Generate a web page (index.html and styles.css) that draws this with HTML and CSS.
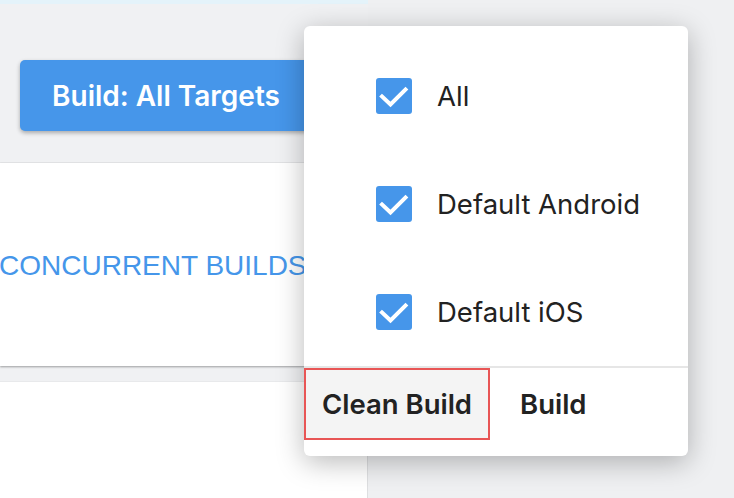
FILE: index.html
```html
<!DOCTYPE html>
<html>
<head>
<meta charset="utf-8">
<link rel="stylesheet" href="styles.css">
</head>
<body>
<div class="page">
  <div class="main">
    <div class="strip"></div>
    <div class="toolbar">
      <button class="primary">Build: All Targets</button>
    </div>
    <div class="card card-top">
      <span class="link">CONCURRENT BUILDS</span>
    </div>
    <div class="card card-bottom"></div>
  </div>
  <div class="popover">
    <ul class="options">
      <li class="option">
        <span class="check"><svg viewBox="0 0 36 36" width="36" height="36"><path d="M6 18.5 L14.5 26.5 L29.5 11.5" fill="none" stroke="#fff" stroke-width="4" stroke-linecap="square"/></svg></span>
        <span class="label">All</span>
      </li>
      <li class="option">
        <span class="check"><svg viewBox="0 0 36 36" width="36" height="36"><path d="M6 18.5 L14.5 26.5 L29.5 11.5" fill="none" stroke="#fff" stroke-width="4" stroke-linecap="square"/></svg></span>
        <span class="label">Default Android</span>
      </li>
      <li class="option">
        <span class="check"><svg viewBox="0 0 36 36" width="36" height="36"><path d="M6 18.5 L14.5 26.5 L29.5 11.5" fill="none" stroke="#fff" stroke-width="4" stroke-linecap="square"/></svg></span>
        <span class="label">Default iOS</span>
      </li>
    </ul>
    <div class="actions">
      <button class="action focused">Clean Build</button>
      <button class="action">Build</button>
    </div>
  </div>
</div>
</body>
</html>
```
FILE: styles.css
```css
* { box-sizing: border-box; }
html, body {
  margin: 0;
  padding: 0;
  width: 734px;
  height: 498px;
  overflow: hidden;
  background: #eff0f2;
  font-family: Inter, "Noto Sans", sans-serif;
}
.page {
  position: relative;
  width: 734px;
  height: 498px;
}
.main {
  width: 368px;
  height: 498px;
  display: flex;
  flex-direction: column;
  background: #f0f1f3;
}
.strip {
  height: 4px;
  background: #e4f3fa;
}
.toolbar {
  height: 159px;
  padding: 56px 0 0 20px;
  border-bottom: 1px solid #e6e7e9;
}
.primary {
  width: 292px;
  height: 71px;
  border: none;
  border-radius: 5px;
  background: #4696ea;
  color: #fff;
  font-family: Inter, sans-serif;
  font-weight: 600;
  font-size: 28px;
  box-shadow: 0 2px 4px rgba(0,0,0,0.3);
  padding: 0;
  white-space: nowrap;
}
.card {
  background: #fff;
}
.card-top {
  height: 203px;
  display: flex;
  align-items: center;
  box-shadow: 0 1px 2px rgba(0,0,0,0.35);
  overflow: hidden;
  white-space: nowrap;
}
.link {
  font-family: "Liberation Sans", Arial, sans-serif;
  font-size: 28px;
  color: #4596ea;
  margin-left: -1px;
  margin-top: 2px;
}
.card-bottom {
  margin-top: 15px;
  flex: 1;
  border-right: 1px solid #dedfe1;
  border-top: 1px solid #e8e9eb;
}
.popover {
  position: absolute;
  left: 304px;
  top: 26px;
  width: 384px;
  height: 430px;
  background: #fff;
  border-radius: 6px;
  box-shadow: 0 6px 28px rgba(0,0,0,0.28);
  display: flex;
  flex-direction: column;
  overflow: hidden;
}
.options {
  list-style: none;
  margin: 0;
  padding: 16px 0 0 72px;
  border-bottom: 2px solid #e6e6e6;
}
.option {
  height: 108px;
  display: flex;
  align-items: center;
  gap: 25px;
}
.check {
  width: 36px;
  height: 36px;
  border-radius: 3px;
  background: #4696ea;
  display: flex;
}
.label {
  font-size: 27.5px;
  color: #222;
  font-weight: 400;
  white-space: nowrap;
}
.actions {
  display: flex;
  height: 72px;
}
.action {
  border: none;
  background: transparent;
  font-family: Inter, sans-serif;
  font-weight: 600;
  font-size: 27.5px;
  color: #222;
  padding: 0 30px;
  height: 72px;
  white-space: nowrap;
}
.action.focused {
  width: 186px;
  padding: 0;
  background: #f4f4f4;
  border: 2px solid #e85555;
}
```
